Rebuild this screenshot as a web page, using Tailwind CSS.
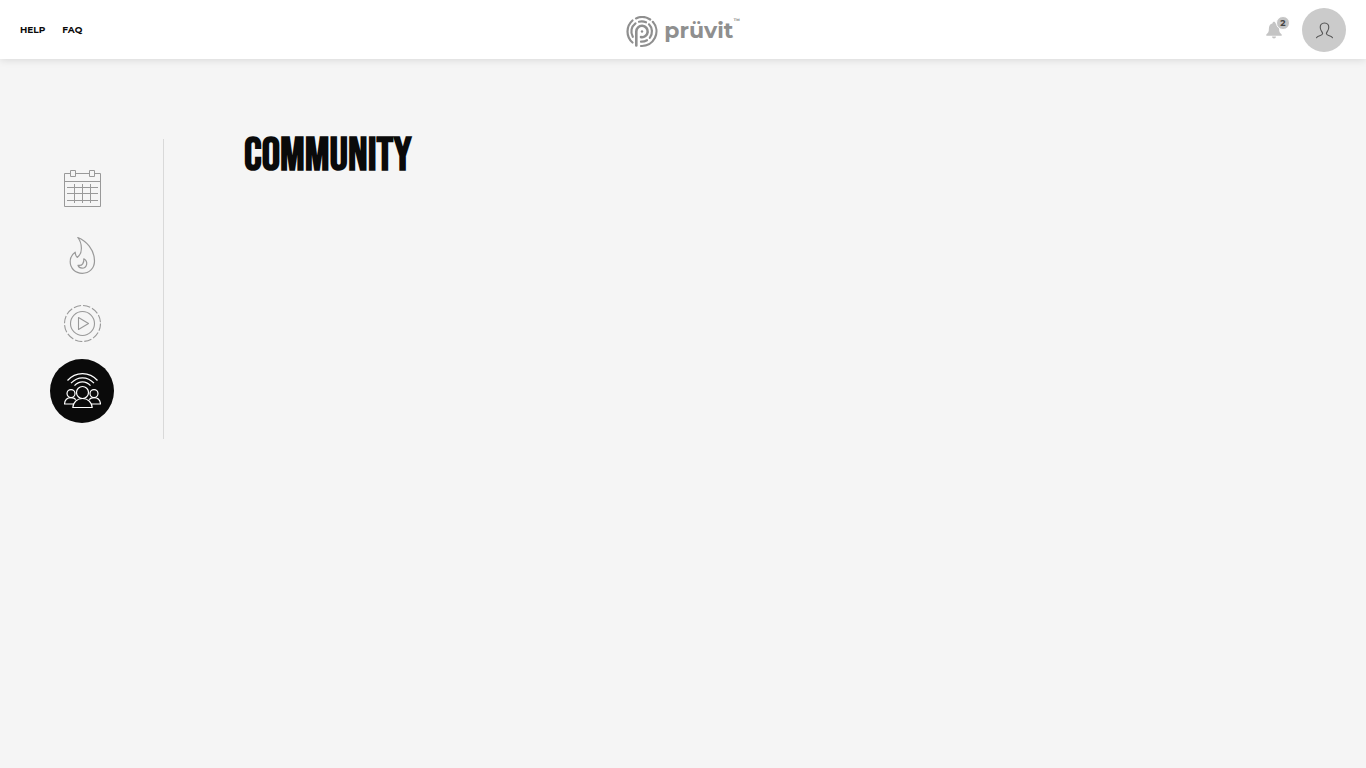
<!DOCTYPE html>
<html lang="en">

<head>
    <meta charset="UTF-8">
    <meta name="viewport" content="width=device-width, initial-scale=1.0">
    <title>Community - Prüvit</title>
    <script src="https://cdn.jsdelivr.net/npm/@tailwindcss/browser@4"></script>
</head>

<body class="min-h-screen bg-[#f5f5f5] font-['Montserrat','Inter',sans-serif] text-[#0a0a0a]">
    <!-- Top bar -->
    <header class="grid grid-cols-3 items-center h-[59px] px-5 bg-white shadow-[0_1px_8px_rgba(0,0,0,0.12)]">
        <nav class="flex gap-[17px] text-[9px] leading-4 font-bold">
            <a href="#help">HELP</a>
            <a href="#faq">FAQ</a>
        </nav>

        <!-- Logo -->
        <a href="#home" class="flex items-center justify-self-center gap-[6px] text-[#8f8f8f]">
            <svg class="size-8 mt-1" viewBox="0 0 32 32" fill="none" stroke="currentColor" stroke-width="2.2" stroke-linecap="round" aria-hidden="true">
                <path d="M6.500 26.500A14.600 14.600 0 0 1 6.500 4.500" />
                <path d="M10 2.400A14.600 14.600 0 0 1 24.200 3.500" />
                <path d="M26.800 5.800A14.600 14.600 0 0 1 15 30" />
                <path d="M6.800 20.800A10.300 10.300 0 0 1 9.500 7.300" />
                <path d="M13 5.700A10.300 10.300 0 0 1 20 6.300" />
                <path d="M23 8.300A10.300 10.300 0 0 1 23.800 21.800" />
                <path d="M21 24.200A10.300 10.300 0 0 1 15 25.700" />
                <path d="M10.300 29.500V15.500A5.700 5.700 0 1 1 15 21.100" stroke-width="2.600" />
                <circle cx="16" cy="15.500" r="1.200" fill="currentColor" stroke="none" />
            </svg>
            <span class="flex items-start mt-0.5">
                <span class="text-[22px] leading-8 font-bold">prüvit</span>
                <span class="text-[6px] leading-3 font-bold">™</span>
            </span>
        </a>

        <div class="flex items-center justify-self-end gap-3">
            <button type="button" class="relative size-7" aria-label="Notifications, 2 new">
                <svg class="w-4 h-[18px] ml-1" viewBox="0 0 16 18" fill="#c4c4c4" aria-hidden="true">
                    <path d="M8 .8c.9 0 1.400.6 1.400 1.400 2.700.7 3.700 2.700 3.700 5.400 0 3.400.7 4.400 2.600 6v1.200H.3v-1.200c1.900-1.600 2.600-2.600 2.600-6 0-2.700 1-4.700 3.700-5.400 0-.8.500-1.400 1.400-1.400zM6 15.400h4a2 2 0 0 1-4 0z" />
                </svg>
                <span class="absolute right-0 top-0 size-[14px] rounded-full bg-[#c4c4c4] border border-white text-[9px] leading-3 font-bold text-[#444] text-center">2</span>
            </button>
            <button type="button" class="flex items-center justify-center size-11 rounded-full bg-[#cbcbcb]" aria-label="Profile">
                <svg class="size-[18px]" viewBox="0 0 18 18" fill="none" stroke="#555" stroke-width="1.1" stroke-linejoin="round" stroke-linecap="round" aria-hidden="true">
                    <path d="M1.500 16.800c.6-1.300 1.600-1.600 3.200-2.100 2-.6 3-1.100 2.900-2.300-.1-1.300-1.800-2.400-2.200-4.900C4.800 4.200 6.300 2 9.500 2s4.700 2.200 4.100 5.500c-.4 2.500-2.100 3.600-2.200 4.900-.1 1.200.9 1.700 2.900 2.300 1.600.5 2.600.8 3.200 2.100" />
                </svg>
            </button>
        </div>
    </header>

    <main class="flex items-start pt-20">
        <!-- Section menu -->
        <aside class="flex flex-col items-center shrink-0 w-[164px] h-[300px] pt-4 gap-1 border-r border-[#d9d9d9]">
            <a href="#calendar" class="flex items-center justify-center size-16" aria-label="Calendar">
                <svg class="size-[38px]" viewBox="0 0 38 38" overflow="visible" fill="none" stroke="#999" stroke-width="1" aria-hidden="true">
                    <path d="M7.500 5.500h-6v33h36v-33h-6M12.500 5.500h14M1.500 13.500h36M7.500 2.500h5v6h-5zM26.500 2.500h5v6h-5z" />
                    <path d="M4 19.500h31M4 25.500h31M4 32.500h31M11.500 16v19M19.500 16v19M27.500 16v19" />
                </svg>
            </a>
            <a href="#challenges" class="flex items-center justify-center size-16" aria-label="Challenges">
                <svg class="size-[38px]" viewBox="0 0 38 38" fill="none" stroke="#999" stroke-width="1.200" stroke-linejoin="round" aria-hidden="true">
                    <path d="M14.800 1.500C23 4.800 31.500 13.500 31.500 25c0 7.300-5.200 12.300-12.200 12.300S7.200 32.300 7.200 25.800c0-4 2-7.500 5-9.600.1 2.200.7 4 2 5.200 2.600-1.900 4.200-5.200 4.200-9.200 0-4.200-1.200-7.600-3.600-10.700z" />
                    <path d="M20.800 22.800c2.200 1.300 3.300 3.500 2.800 5.800-.5 2.300-2.300 3.600-4.500 3.600-2 0-3.500-1-4.100-2.900 2 .4 3.700 0 4.700-1.500 1.100-1.600 1.300-3.200 1.100-5z" />
                </svg>
            </a>
            <a href="#videos" class="flex items-center justify-center size-16" aria-label="Videos">
                <svg class="size-[38px]" viewBox="0 0 38 38" fill="none" stroke="#999" stroke-width="1.100" aria-hidden="true">
                    <circle cx="19.500" cy="19.500" r="18" stroke-dasharray="7.420 2" />
                    <circle cx="19.500" cy="19.500" r="12" />
                    <path d="M15.500 13.500v12l10-6z" stroke-linejoin="round" />
                </svg>
            </a>
            <a href="#community" class="flex items-center justify-center size-16 rounded-full bg-[#0a0a0a]" aria-label="Community" aria-current="page">
                <svg class="size-[38px]" viewBox="0 0 38 38" fill="none" stroke="#fff" stroke-width="1.200" stroke-linejoin="round" aria-hidden="true">
                    <path d="M4.500 8.500C12.500-.8 26.500-.8 34.500 8.500M8 11.200C14.500 4 24.500 4 31 11.200M11.500 13.700C16 8.500 23 8.500 27.500 13.700" />
                    <circle cx="19.500" cy="20.500" r="6" />
                    <circle cx="8" cy="21.600" r="4" />
                    <circle cx="31" cy="21.600" r="4" />
                    <path d="M9.800 35.500c.4-5.500 4.300-9 9.700-9s9.300 3.500 9.700 9z" />
                    <path d="M10.500 32H1.500c.3-4 2.700-6.400 6.500-6.400 2.100 0 3.700.6 4.900 2M28.500 32h9c-.3-4-2.700-6.400-6.500-6.400-2.100 0-3.700.6-4.900 2" />
                </svg>
            </a>
        </aside>

        <section class="flex-1 pl-20">
            <h1 class="font-['Bebas_Neue','Liberation_Sans_Narrow',sans-serif] text-[46px] leading-9 font-bold">COMMUNITY</h1>
        </section>
    </main>
</body>

</html>
